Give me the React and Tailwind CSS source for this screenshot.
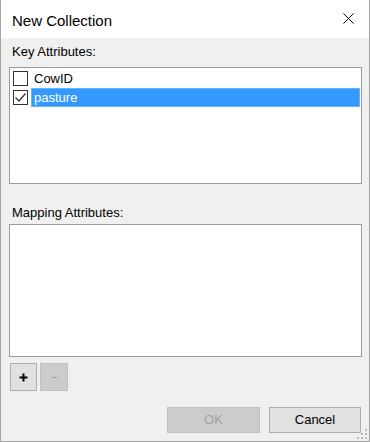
import React from "react";

const Check = ({ checked }) => (
  <div className="w-[15px] h-[15px] border border-[#333333] bg-white flex items-center justify-center shrink-0">
    {checked ? (
      <svg width="13" height="13" viewBox="0 0 13 13">
        <path d="M1.5 6.5 L5 10 L11.5 2.5" fill="none" stroke="#333333" strokeWidth="1.3" />
      </svg>
    ) : null}
  </div>
);

const Row = ({ label, checked, selected }) => (
  <div className="flex items-center h-[19px]">
    <div className="pl-[2px] pr-[3px] pt-[2px] self-start">
      <Check checked={checked} />
    </div>
    <div
      className={
        selected
          ? "flex-1 h-[19px] bg-[#3399ff] border border-[#66b2ff] text-white pl-[2px] leading-[17px] mr-[1px]"
          : "flex-1 h-[19px] text-black pl-[3px] leading-[19px]"
      }
    >
      {label}
    </div>
  </div>
);

const App = () => {
  return (
    <div
      className="relative w-[370px] h-[442px] flex flex-col border-x border-b border-[#a6a6a6] bg-[#f0f0f0] text-[13px]"
      style={{ fontFamily: '"Liberation Sans", Arial, sans-serif' }}
    >
      <div className="h-[38px] bg-white flex justify-between items-start pl-[11px] pr-[15px]">
        <span className="text-[15px] leading-[17px] pt-[12px] text-black">New Collection</span>
        <svg width="11" height="11" viewBox="0 0 11 11" className="mt-[13px]">
          <path d="M0.5 0.5 L10.5 10.5 M10.5 0.5 L0.5 10.5" stroke="#000" strokeWidth="1" />
        </svg>
      </div>

      <div className="flex-1 flex flex-col pl-[8px] pr-[7px] pt-[6px]">
        <div className="pl-[3px] leading-[15px] text-black">Key Attributes:</div>
        <div className="mt-[8px] h-[117px] bg-white border border-[#9a9a9a] pt-[1px] pl-[1px]">
          <Row label="CowID" />
          <Row label="pasture" checked selected />
        </div>

        <div className="mt-[21px] pl-[3px] leading-[15px] text-black">Mapping Attributes:</div>
        <div className="mt-[4px] h-[133px] bg-white border border-[#9a9a9a]" />

        <div className="mt-[6px] ml-[1px] flex gap-[3px]">
          <button className="w-[27px] h-[28px] bg-[#e1e1e1] border border-[#adadad] flex items-center justify-center">
            <svg width="9" height="9" viewBox="0 0 9 9">
              <path d="M4.5 0.5 V8.5 M0.5 4.5 H8.5" stroke="#000" strokeWidth="2" />
            </svg>
          </button>
          <button className="w-[28px] h-[28px] bg-[#cccccc] border border-[#bfbfbf] flex items-center justify-center">
            <div className="w-[5px] h-[1px] bg-[#a0a0a0]" />
          </button>
        </div>

        <div className="mt-[16px] flex justify-end gap-[9px] mr-[1px]">
          <button className="w-[93px] h-[26px] bg-[#cccccc] border border-[#bfbfbf] text-[#a0a0a0] leading-[24px]">
            OK
          </button>
          <button className="w-[92px] h-[26px] bg-[#e1e1e1] border border-[#adadad] text-black leading-[24px]">
            Cancel
          </button>
        </div>
      </div>

      <svg width="11" height="11" viewBox="0 0 11 11" className="absolute right-[1px] bottom-[1px]">
        <rect x="8" y="0" width="2" height="2" fill="#b8b8b8" />
        <rect x="8" y="4" width="2" height="2" fill="#b8b8b8" />
        <rect x="4" y="4" width="2" height="2" fill="#b8b8b8" />
        <rect x="8" y="8" width="2" height="2" fill="#b8b8b8" />
        <rect x="4" y="8" width="2" height="2" fill="#b8b8b8" />
        <rect x="0" y="8" width="2" height="2" fill="#b8b8b8" />
      </svg>
    </div>
  );
};

export default App;
